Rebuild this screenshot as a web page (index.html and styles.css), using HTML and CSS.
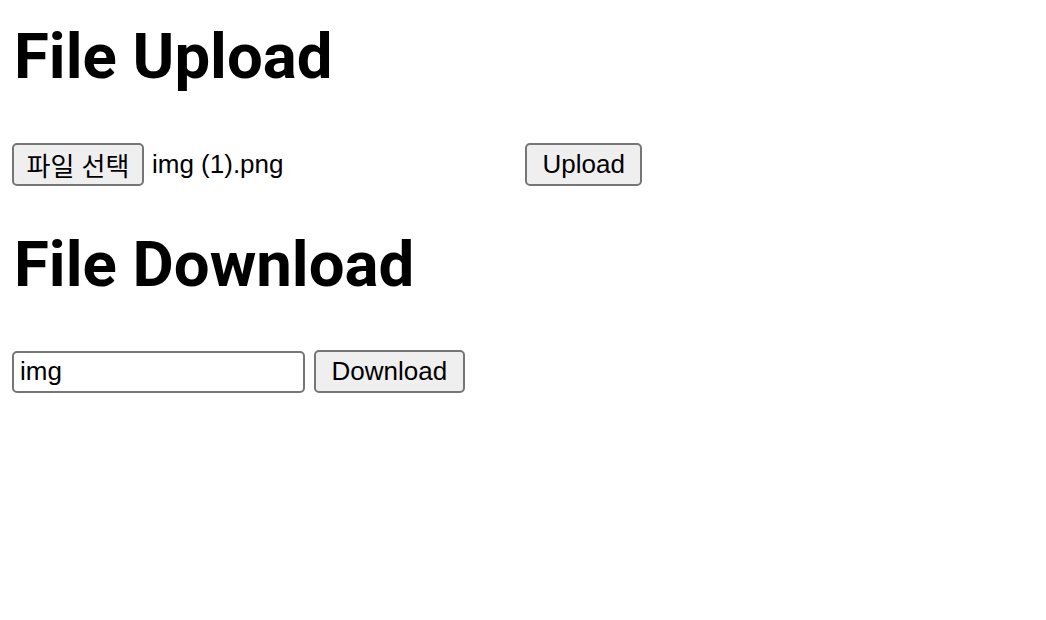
FILE: index.html
```html
<html>
<head>
<meta charset="utf-8">
<title>File</title>
<link rel="stylesheet" href="styles.css">
</head>
<body>
<h1 class='title first'>File Upload</h1>
<form class='row' onsubmit='return false'>
  <div class='file-pick'>
    <button type='button' class='btn pick'>파일 선택</button>
    <span class='file-name'>img (1).png</span>
  </div>
  <button type='submit' class='btn'>Upload</button>
</form>
<h1 class='title'>File Download</h1>
<form class='row' onsubmit='return false'>
  <input type='text' class='name-input' value='img'>
  <button type='submit' class='btn'>Download</button>
</form>
</body>
</html>
```
FILE: styles.css
```css
html {
  background: white;
}
body {
  margin: 0;
  padding: 0 12px;
}
.title {
  font-family: Roboto, sans-serif;
  font-weight: bold;
  font-size: 63.5px;
  line-height: 1;
  height: 64px;
  margin: 47px 0 53px 2px;
}
.title.first {
  margin-top: 25px;
  margin-bottom: 54px;
}
.row {
  display: flex;
  align-items: center;
  margin: 0;
}
.file-pick {
  display: flex;
  align-items: center;
  gap: 8px;
  width: 513px;
}
.btn, .name-input, .file-name {
  font-family: "Liberation Sans", "Noto Sans CJK KR", sans-serif;
  font-size: 26px;
  color: black;
}
.btn {
  box-sizing: border-box;
  height: 43px;
  padding: 0 15.5px;
  background: #efefef;
  border: 2px solid #767676;
  border-radius: 5px;
}
.pick {
  width: 132px;
  padding: 0;
}
.name-input {
  box-sizing: border-box;
  width: 293px;
  height: 42px;
  padding: 0 6px;
  margin-right: 9px;
  border: 2px solid #767676;
  border-radius: 5px;
}
```
